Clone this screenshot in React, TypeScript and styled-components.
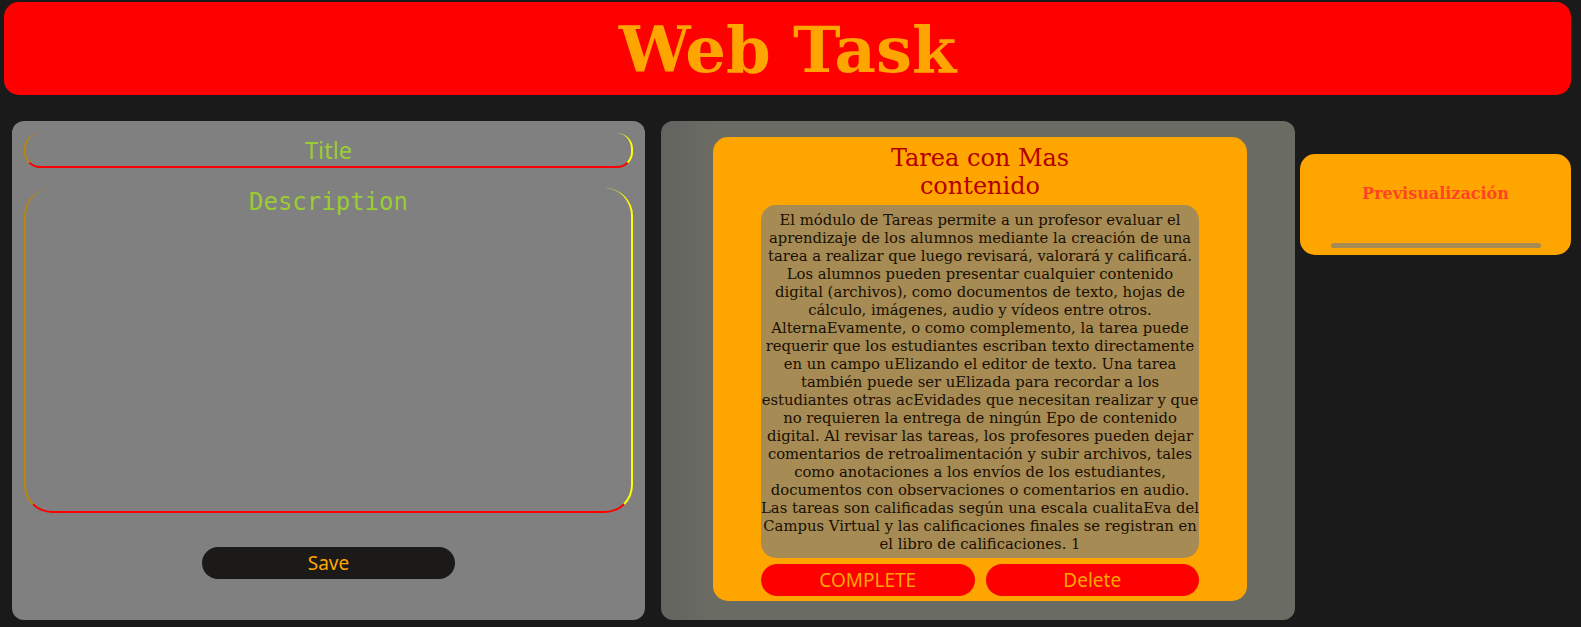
import styled, { createGlobalStyle } from 'styled-components'

const GlobalStyle = createGlobalStyle`
  body {
    margin: 0;
    background-color: #1a1a1a;
    font-family: "DejaVu Serif", serif;
  }
`

const description =
  'El módulo de Tareas permite a un profesor evaluar el aprendizaje de los alumnos mediante la creación de una tarea a realizar que luego revisará, valorará y calificará. Los alumnos pueden presentar cualquier contenido digital (archivos), como documentos de texto, hojas de cálculo, imágenes, audio y vídeos entre otros. AlternaEvamente, o como complemento, la tarea puede requerir que los estudiantes escriban texto directamente en un campo uElizando el editor de texto. Una tarea también puede ser uElizada para recordar a los estudiantes otras acEvidades que necesitan realizar y que no requieren la entrega de ningún Epo de contenido digital. Al revisar las tareas, los profesores pueden dejar comentarios de retroalimentación y subir archivos, tales como anotaciones a los envíos de los estudiantes, documentos con observaciones o comentarios en audio. Las tareas son calificadas según una escala cualitaEva del Campus Virtual y las calificaciones finales se registran en el libro de calificaciones. 1'

const App = () => {
  return (
    <>
      <GlobalStyle />
      <Page>
        <Header>
          <Logo>Web Task</Logo>
        </Header>
        <Main>
          <FormPanel>
            <TitleInput placeholder="Title" />
            <DescriptionInput placeholder="Description" />
            <SaveButton>Save</SaveButton>
          </FormPanel>
          <TaskPanel>
            <TaskCard>
              <TaskTitle>Tarea con Mas contenido</TaskTitle>
              <TaskText>{description}</TaskText>
              <Actions>
                <ActionButton>COMPLETE</ActionButton>
                <ActionButton>Delete</ActionButton>
              </Actions>
            </TaskCard>
          </TaskPanel>
          <PreviewCard>
            <PreviewTitle>Previsualización</PreviewTitle>
            <PreviewBar />
          </PreviewCard>
        </Main>
      </Page>
    </>
  )
}

const Page = styled.div`
  padding: 2px 10px 0 4px;
`

const Header = styled.header`
  height: 93px;
  background-color: #ff0000;
  border-radius: 15px;
  display: flex;
  justify-content: center;
  align-items: center;
`

const Logo = styled.h1`
  margin: 2px 0 0;
  font-family: "DejaVu Serif", serif;
  font-weight: bold;
  font-size: 64px;
  color: #ffa500;
`

const Main = styled.main`
  display: flex;
  align-items: flex-start;
  margin-top: 26px;
  padding-left: 8px;
`

const FormPanel = styled.section`
  width: 633px;
  height: 499px;
  box-sizing: border-box;
  background-color: #808080;
  border-radius: 12px;
  padding: 12px 12px 0 12px;
  display: flex;
  flex-direction: column;
  align-items: center;
`

const fieldBorder = `
  box-sizing: border-box;
  width: 100%;
  background: transparent;
  border: 2px solid;
  border-top-width: 0;
  border-color: transparent #ffff00 #ff0000 #b8860b;
  outline: none;
  text-align: center;
  color: #9acd32;
  &::placeholder {
    color: #9acd32;
    opacity: 1;
  }
`

const TitleInput = styled.input`
  ${fieldBorder}
  height: 35px;
  border-radius: 16px;
  font-family: "Noto Sans", sans-serif;
  font-size: 23.5px;
  padding: 0;
`

const DescriptionInput = styled.textarea`
  ${fieldBorder}
  margin-top: 20px;
  height: 325px;
  border-radius: 28px;
  font-family: "DejaVu Sans Mono", monospace;
  font-size: 24px;
  padding: 0 20px;
  resize: none;
`

const SaveButton = styled.button`
  margin-top: 34px;
  width: 253px;
  height: 32px;
  border: none;
  border-radius: 16px;
  background-color: #1c1a19;
  color: #ffa500;
  font-family: "Noto Sans", sans-serif;
  font-size: 19px;
`

const TaskPanel = styled.section`
  margin-left: 16px;
  width: 634px;
  height: 499px;
  box-sizing: border-box;
  background: linear-gradient(90deg, #636360, #6a6b63 8%);
  border-radius: 12px;
  padding: 16px 0 0 4px;
  display: flex;
  justify-content: center;
`

const TaskCard = styled.article`
  width: 534px;
  height: 464px;
  box-sizing: border-box;
  background-color: #ffa500;
  border-radius: 15px;
  padding: 7px 48px 6px;
  display: flex;
  flex-direction: column;
  align-items: center;
`

const TaskTitle = styled.h2`
  margin: 0;
  max-width: 230px;
  text-align: center;
  font-family: "DejaVu Serif", serif;
  font-weight: normal;
  font-size: 24px;
  color: #b30000;
`

const TaskText = styled.p`
  margin: 5px 0 0;
  width: 100%;
  box-sizing: border-box;
  padding: 6px 0 5px;
  background-color: #a68b55;
  border-radius: 15px;
  text-align: center;
  font-family: "DejaVu Serif", serif;
  font-size: 14.8px;
  line-height: 18px;
  color: #1a0f00;
`

const Actions = styled.div`
  margin-top: 6px;
  width: 100%;
  display: grid;
  grid-template-columns: 1fr 1fr;
  gap: 11px;
`

const ActionButton = styled.button`
  height: 32px;
  border: none;
  border-radius: 16px;
  background-color: #ff0000;
  color: #ffa500;
  font-family: "Noto Sans", sans-serif;
  font-size: 19px;
`

const PreviewCard = styled.aside`
  margin-left: 5px;
  margin-top: 33px;
  width: 271px;
  height: 101px;
  box-sizing: border-box;
  background-color: #ffa500;
  border-radius: 15px;
  padding-top: 30px;
  display: flex;
  flex-direction: column;
  align-items: center;
`

const PreviewTitle = styled.h3`
  margin: 0;
  font-family: "DejaVu Serif", serif;
  font-weight: bold;
  font-size: 16px;
  color: #ff4422;
`

const PreviewBar = styled.div`
  margin-top: 40px;
  width: 210px;
  height: 5px;
  border-radius: 3px;
  background-color: #a68b55;
`

export default App
